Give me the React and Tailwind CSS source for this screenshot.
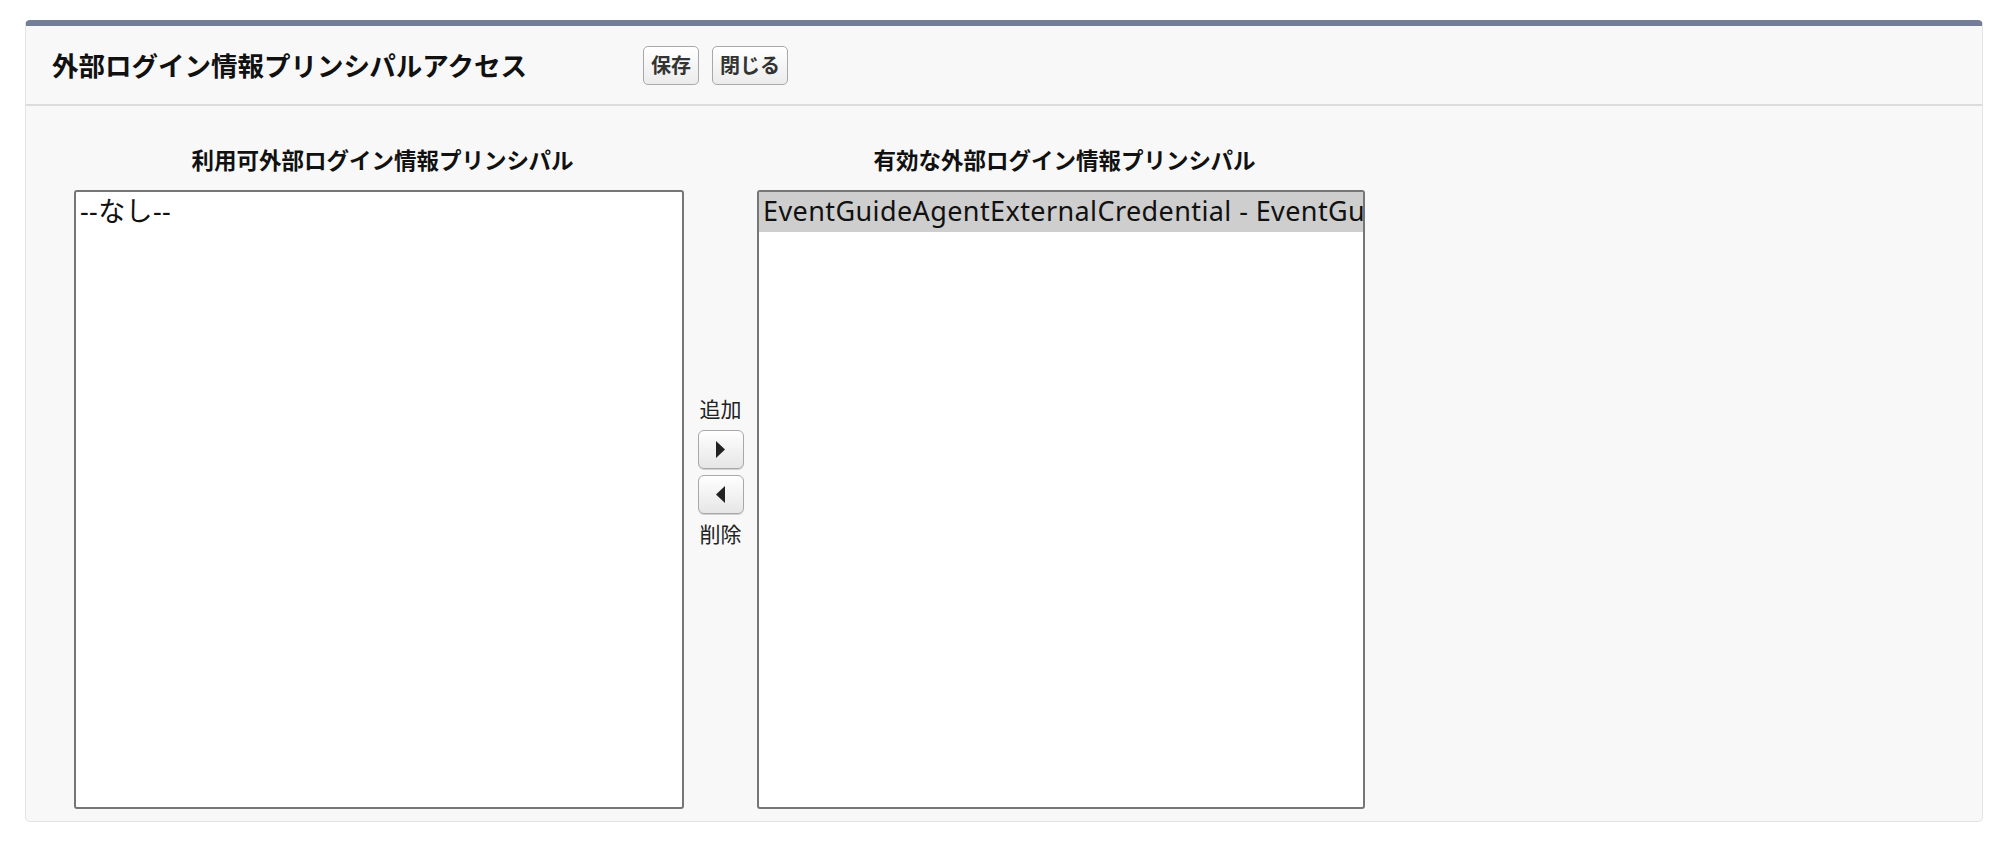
import React from 'react';

const jp = { fontFamily: '"Noto Sans CJK JP", "Noto Sans", sans-serif' };
const listFont = { fontFamily: '"Noto Sans", "Noto Sans CJK JP", sans-serif' };

function Arrow({ dir }) {
  return (
    <button className="w-[46px] h-[39px] flex items-center justify-center rounded-[6px] border border-[#a8a8a8] bg-gradient-to-b from-white to-[#e6e6e6] shadow-[0_1px_0_#d0d0d0]">
      <svg width="11" height="17" viewBox="0 0 11 17">
        {dir === 'right' ? <path d="M1 0 L10 8.5 L1 17 Z" fill="#222" /> : <path d="M10 0 L1 8.5 L10 17 Z" fill="#222" />}
      </svg>
    </button>
  );
}

function Listbox({ children }) {
  return (
    <div className="h-[619px] bg-white border-2 border-[#767676] rounded-[3px] overflow-hidden text-[27px] tracking-[0.4px] text-[#111]" style={listFont}>
      {children}
    </div>
  );
}

export default function App() {
  return (
    <div className="min-h-screen bg-white pt-[20px] pl-[25px]" style={jp}>
      <div className="w-[1958px] h-[802px] bg-[#f8f8f8] border border-[#e3e3e3] border-t-[6px] border-t-[#747e96] rounded-[5px] flex flex-col">
        {/* header */}
        <div className="h-[80px] flex items-center pl-[26px] border-b-2 border-[#dcdcdc]">
          <h2 className="w-[591px] text-[26.5px] font-bold text-[#111] leading-none">外部ログイン情報プリンシパルアクセス</h2>
          <div className="flex gap-[13px]">
            <button className="h-[39px] px-[7px] rounded-[5px] border border-[#a8a8a8] bg-gradient-to-b from-white to-[#ececec] text-[20px] font-bold text-[#333] leading-none">保存</button>
            <button className="h-[39px] px-[7px] rounded-[5px] border border-[#a8a8a8] bg-gradient-to-b from-white to-[#ececec] text-[20px] font-bold text-[#333] leading-none">閉じる</button>
          </div>
        </div>

        {/* dual list */}
        <div className="flex pt-[38px] pl-[48px]">
          <div className="w-[610px]">
            <div className="text-center pl-[7px] text-[22.5px] font-bold text-[#111] leading-[30px] mb-[16px]">利用可外部ログイン情報プリンシパル</div>
            <Listbox>
              <div className="h-[40px] leading-[38px] pl-[4px] whitespace-nowrap">--なし--</div>
            </Listbox>
          </div>

          <div className="w-[73px] flex flex-col items-center pt-[251px] text-[21px] text-[#222]">
            <div className="leading-[26px] mb-[9px]">追加</div>
            <Arrow dir="right" />
            <div className="h-[6px]" />
            <Arrow dir="left" />
            <div className="leading-[26px] mt-[6px]">削除</div>
          </div>

          <div className="w-[608px]">
            <div className="text-center pl-[7px] text-[22.5px] font-bold text-[#111] leading-[30px] mb-[16px]">有効な外部ログイン情報プリンシパル</div>
            <Listbox>
              <div className="h-[40px] leading-[38px] pl-[4px] bg-[#cecece] whitespace-nowrap">EventGuideAgentExternalCredential - EventGuideAgentPrincipal</div>
            </Listbox>
          </div>
        </div>
      </div>
    </div>
  );
}
